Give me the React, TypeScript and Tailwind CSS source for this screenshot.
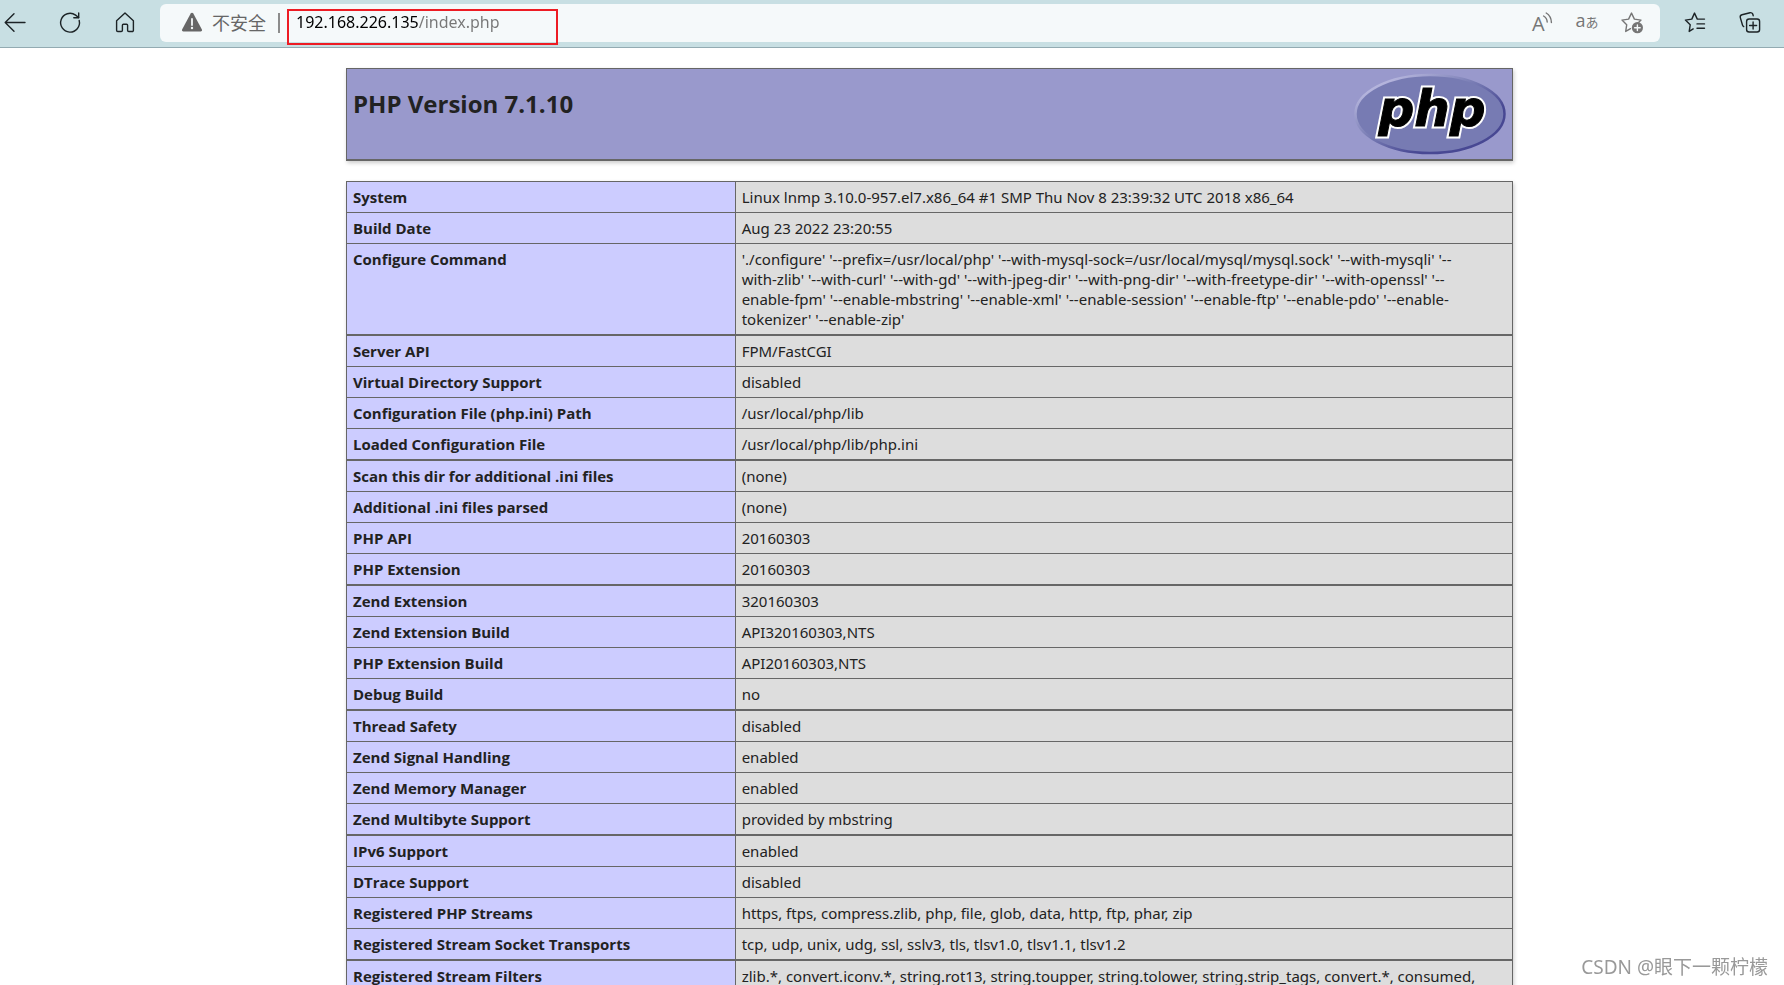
import { useState } from 'react'
import type { ReactNode } from 'react'
import clsx from 'clsx'

// ── Data ──────────────────────────────────────────────────────────────────────

interface InfoRow {
  label: string
  value: string
  thick?: boolean
}

const rows: InfoRow[] = [
  { label: 'System', value: 'Linux lnmp 3.10.0-957.el7.x86_64 #1 SMP Thu Nov 8 23:39:32 UTC 2018 x86_64' },
  { label: 'Build Date', value: 'Aug 23 2022 23:20:55' },
  {
    label: 'Configure Command',
    value: [
      "'./configure' '--prefix=/usr/local/php' '--with-mysql-sock=/usr/local/mysql/mysql.sock' '--with-mysqli' '--",
      "with-zlib' '--with-curl' '--with-gd' '--with-jpeg-dir' '--with-png-dir' '--with-freetype-dir' '--with-openssl' '--",
      "enable-fpm' '--enable-mbstring' '--enable-xml' '--enable-session' '--enable-ftp' '--enable-pdo' '--enable-",
      "tokenizer' '--enable-zip'",
    ].join('\n'),
    thick: true,
  },
  { label: 'Server API', value: 'FPM/FastCGI' },
  { label: 'Virtual Directory Support', value: 'disabled' },
  { label: 'Configuration File (php.ini) Path', value: '/usr/local/php/lib' },
  { label: 'Loaded Configuration File', value: '/usr/local/php/lib/php.ini', thick: true },
  { label: 'Scan this dir for additional .ini files', value: '(none)' },
  { label: 'Additional .ini files parsed', value: '(none)' },
  { label: 'PHP API', value: '20160303' },
  { label: 'PHP Extension', value: '20160303', thick: true },
  { label: 'Zend Extension', value: '320160303' },
  { label: 'Zend Extension Build', value: 'API320160303,NTS' },
  { label: 'PHP Extension Build', value: 'API20160303,NTS' },
  { label: 'Debug Build', value: 'no', thick: true },
  { label: 'Thread Safety', value: 'disabled' },
  { label: 'Zend Signal Handling', value: 'enabled' },
  { label: 'Zend Memory Manager', value: 'enabled' },
  { label: 'Zend Multibyte Support', value: 'provided by mbstring', thick: true },
  { label: 'IPv6 Support', value: 'enabled' },
  { label: 'DTrace Support', value: 'disabled' },
  { label: 'Registered PHP Streams', value: 'https, ftps, compress.zlib, php, file, glob, data, http, ftp, phar, zip' },
  {
    label: 'Registered Stream Socket Transports',
    value: 'tcp, udp, unix, udg, ssl, sslv3, tls, tlsv1.0, tlsv1.1, tlsv1.2',
    thick: true,
  },
  {
    label: 'Registered Stream Filters',
    value:
      'zlib.*, convert.iconv.*, string.rot13, string.toupper, string.tolower, string.strip_tags, convert.*, consumed,',
  },
]

// ── Icons ─────────────────────────────────────────────────────────────────────

function Icon({ children }: { children: ReactNode }) {
  return (
    <svg
      viewBox="0 0 24 24"
      fill="none"
      stroke="currentColor"
      strokeWidth="1.4"
      strokeLinecap="round"
      strokeLinejoin="round"
      className="size-6"
      aria-hidden="true"
    >
      {children}
    </svg>
  )
}

function BackIcon() {
  return (
    <Icon>
      <path d="M22 11.500H2.500M11 2.700 2.200 11.500l8.800 8.800" />
    </Icon>
  )
}

function RefreshIcon() {
  return (
    <Icon>
      <path d="M21.200 9.500A9.400 9.400 0 1 1 17.600 4.100L20.600 6.500" />
      <path d="M20.700 1.900V6.700H15.800" />
    </Icon>
  )
}

function HomeIcon() {
  return (
    <Icon>
      <path d="M3.600 9.700 12 2.100l8.400 7.600v9.600a1.200 1.200 0 0 1-1.200 1.200h-3.400a1.200 1.200 0 0 1-1.200-1.200v-5a1 1 0 0 0-1-1h-3.200a1 1 0 0 0-1 1v5A1.200 1.200 0 0 1 8.200 20.500H4.800a1.200 1.200 0 0 1-1.200-1.200z" />
    </Icon>
  )
}

function WarningIcon() {
  return (
    <svg viewBox="0 0 24 24" className="size-6 shrink-0" aria-hidden="true">
      <path
        d="M10.700 2.400a1.500 1.500 0 0 1 2.600 0l8.600 16a1.500 1.500 0 0 1-1.300 2.200H3.400a1.500 1.500 0 0 1-1.300-2.200z"
        fill="#666"
      />
      <path d="M12 8v6" stroke="#f5f9fa" strokeWidth="1.800" strokeLinecap="round" />
      <circle cx="12" cy="17" r="1.200" fill="#f5f9fa" />
    </svg>
  )
}

function ReadAloudIcon() {
  return (
    <svg viewBox="0 0 24 24" fill="none" className="size-6 overflow-visible" aria-hidden="true">
      <text x="2" y="20" fontSize="20" fontFamily="Open Sans" fill="currentColor">
        A
      </text>
      <path
        d="M13.600 5q3.400 2 3.600 6M16.200 2q5 3 5.200 9.500"
        stroke="currentColor"
        strokeWidth="1.400"
        strokeLinecap="round"
      />
    </svg>
  )
}

function AddFavoriteIcon() {
  return (
    <Icon>
      <path d="M10.500 17.700 5.700 20.400l1-6.600L2 9.100l6.600-1L11.500 2.100l2.900 6 6.600 1-2.200 2.200" />
      <circle cx="17.400" cy="16.700" r="5.600" fill="currentColor" stroke="none" />
      <path d="M17.400 13.900v5.600M14.600 16.700h5.600" stroke="#f5f9fa" />
    </Icon>
  )
}

function FavoritesIcon() {
  return (
    <Icon>
      <path d="M10.200 17.900 6.200 20.400l1-6.600L2.400 9.100l6.400-1L11.500 2.100l2.800 6h7.200M14 12.900h7.500M14 17.300h7.500" />
    </Icon>
  )
}

function CollectionsIcon() {
  return (
    <Icon>
      <rect x="8.600" y="8" width="13" height="13" rx="2.500" />
      <path d="M15.100 11v7M11.600 14.500h7" />
      <path d="M5.700 15.600a3 3 0 0 1-1.300-1.800L2.300 6.600A2.400 2.400 0 0 1 4 3.700l8-2a2.400 2.400 0 0 1 2.900 1.800l.3 1.200" />
    </Icon>
  )
}

function PhpLogo() {
  return (
    <svg viewBox="0 0 152 82" className="h-[82px] w-[152px]" role="img" aria-label="PHP logo">
      <defs>
        <linearGradient id="rim" x1="0" y1="0" x2="1" y2="1">
          <stop offset="0.150" stopColor="#b4b4dc" />
          <stop offset="0.450" stopColor="#777bb3" />
          <stop offset="0.700" stopColor="#484893" />
        </linearGradient>
      </defs>
      <ellipse cx="76" cy="41" rx="74.500" ry="39" fill="#777bb3" stroke="url(#rim)" strokeWidth="2.500" />
      {/* White outline with a thinner black stroke on top for the heavy letters */}
      <g
        textAnchor="middle"
        fontFamily="DejaVu Sans"
        fontSize="50"
        fontWeight="bold"
        fontStyle="italic"
        strokeLinejoin="miter"
      >
        <text x="78" y="53" fill="#fff" stroke="#fff" strokeWidth="5" aria-hidden="true">
          php
        </text>
        <text x="78" y="53" fill="#000" stroke="#000" strokeWidth="1">
          php
        </text>
      </g>
    </svg>
  )
}

// ── Browser bar ───────────────────────────────────────────────────────────────

interface BarButtonProps {
  label: string
  children: ReactNode
}

function BarButton({ label, children }: BarButtonProps) {
  return (
    <button type="button" aria-label={label} className="flex size-6 shrink-0 items-center justify-center">
      {children}
    </button>
  )
}

function BrowserBar() {
  const [url, setUrl] = useState('192.168.226.135/index.php')

  return (
    <header className="flex h-12 shrink-0 items-start border-b border-[#93abb2] bg-[#c8dfe3] pr-[22px] pl-[3px] text-[#1c2326]">
      <nav className="flex h-[46px] w-[157px] shrink-0 items-center gap-[31px]" aria-label="Navigation">
        <BarButton label="Back"><BackIcon /></BarButton>
        <BarButton label="Refresh"><RefreshIcon /></BarButton>
        <BarButton label="Home"><HomeIcon /></BarButton>
      </nav>

      <div className="mt-1 flex h-[38px] min-w-0 flex-1 items-center rounded-md bg-[#f5f9fa] pr-4 pl-5 text-[#767676]">
        <button type="button" className="flex shrink-0 items-center gap-2">
          <WarningIcon />
          <span className="text-[18px] leading-6 text-[#666]">不安全</span>
        </button>
        <span className="ml-3 h-5 w-0.5 shrink-0 bg-[#8c8c8c]" />
        {/* Highlighted address */}
        <div className="relative ml-4 min-w-0 flex-1">
          <input
            type="text"
            aria-label="Address"
            value={url}
            onChange={(e) => setUrl(e.target.value)}
            spellCheck={false}
            className="block h-7 w-full bg-[linear-gradient(90deg,#000_123px,#767676_123px)] bg-clip-text pb-0.5 font-['Noto_Sans',sans-serif] text-[16px] leading-6 text-transparent caret-black outline-none"
          />
          <span className="pointer-events-none absolute top-0 -left-[9px] h-9 w-[271px] border-2 border-[#ed1c24]" />
        </div>
        <div className="flex shrink-0 items-center gap-[21px]">
          <BarButton label="Read aloud"><ReadAloudIcon /></BarButton>
          <BarButton label="Translate">
            <span className="flex items-baseline pb-1 leading-6">
              <span className="text-[18px]">a</span>
              <span className="text-[13px]">あ</span>
            </span>
          </BarButton>
          <BarButton label="Add to favorites"><AddFavoriteIcon /></BarButton>
        </div>
      </div>

      <div className="flex h-[46px] shrink-0 items-center gap-[31px] pl-[23px]">
        <BarButton label="Favorites"><FavoritesIcon /></BarButton>
        <BarButton label="Collections"><CollectionsIcon /></BarButton>
      </div>
    </header>
  )
}

// ── Info table ────────────────────────────────────────────────────────────────

function InfoTable() {
  return (
    <table className="w-full table-fixed border-separate border-spacing-0 border-t border-l border-[#666] text-left text-[15px] leading-5 shadow-[1px_2px_4px_#ccc]">
      <colgroup>
        <col className="w-1/3" />
        <col />
      </colgroup>
      <tbody>
        {rows.map((row) => (
          <tr key={row.label} className="align-top">
            <th
              scope="row"
              className={clsx(
                'border-r border-[#666] bg-[#ccccff] px-1.5 py-[5px] font-bold',
                row.thick ? 'border-b-2' : 'border-b',
              )}
            >
              {row.label}
            </th>
            <td
              className={clsx(
                "border-r border-[#666] bg-[#dddddd] px-1.5 py-[5px] font-['Noto_Sans',sans-serif] whitespace-pre-line",
                row.thick ? 'border-b-2' : 'border-b',
              )}
            >
              {row.value}
            </td>
          </tr>
        ))}
      </tbody>
    </table>
  )
}

// ── Page ──────────────────────────────────────────────────────────────────────

export default function App() {
  return (
    <div className="flex h-screen flex-col bg-white font-['Open_Sans','Noto_Sans_CJK_SC',sans-serif] text-[#222]">
      <BrowserBar />

      <main className="min-h-0 flex-1 overflow-y-auto pt-5 pl-[75px] [scrollbar-width:none]">
        <div className="mx-auto flex w-full max-w-[1167px] flex-col gap-5">
          <div className="flex justify-between border border-b-2 border-[#666] bg-[#9999cc] px-1.5 shadow-[1px_2px_4px_#ccc]">
            <h1 className="pt-[19px] text-[24px] leading-8 font-bold">PHP Version 7.1.10</h1>
            <div className="py-1">
              <PhpLogo />
            </div>
          </div>
          <InfoTable />
        </div>
      </main>

      <p className="fixed right-4 bottom-1.5 font-['Noto_Sans','Noto_Sans_CJK_SC',sans-serif] text-[19px] leading-6 text-[#999]">
        CSDN @眼下一颗柠檬
      </p>
    </div>
  )
}
